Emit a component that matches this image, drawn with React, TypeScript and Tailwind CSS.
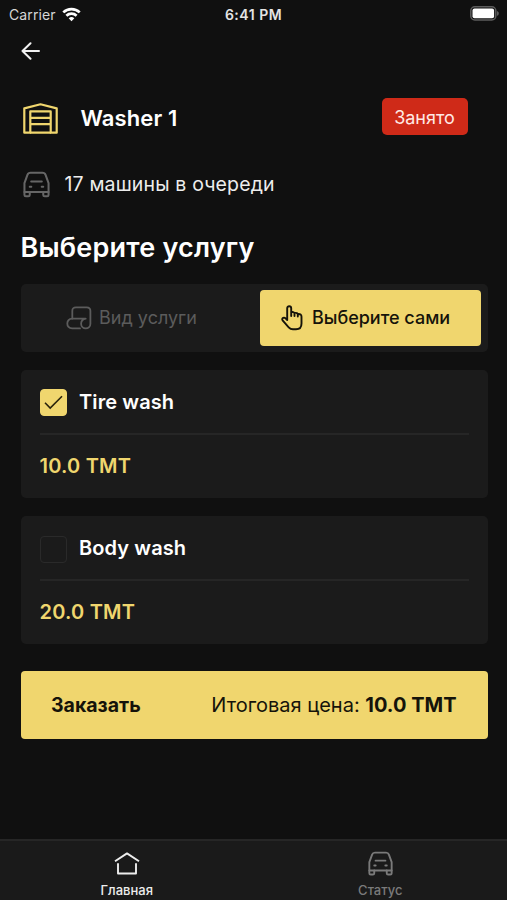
import { useState } from 'react'

type Service = {
  id: number
  name: string
  price: number
}

const services: Service[] = [
  { id: 1, name: 'Tire wash', price: 10 },
  { id: 2, name: 'Body wash', price: 20 },
]

function StatusBar() {
  return (
    <div className="grid h-7 grid-cols-3 items-center px-[9px] text-[14px] text-[#d6d6d6]">
      <div className="flex items-center gap-1.5">
        <span className="tracking-[0.1px]">Carrier</span>
        <svg width="19" height="15" viewBox="0 0 19 15" fill="none" stroke="#fff" strokeWidth="2.7">
          <path d="M1.3 5.4a11.8 11.8 0 0 1 16.4 0" />
          <path d="M4.4 8.8a7.3 7.3 0 0 1 10.2 0" />
          <path d="M9.5 14.2 6.7 11.3a4 4 0 0 1 5.6 0Z" fill="#fff" stroke="none" />
        </svg>
      </div>
      <span className="text-center text-[14px] font-semibold tracking-[0.5px] whitespace-nowrap text-[#e4e4e4]">6:41 PM</span>
      <svg className="-mr-[1px] mb-px justify-self-end" width="29" height="15" viewBox="0 0 29 15">
        <rect x=".8" y=".8" width="25" height="13.2" rx="4" fill="none" stroke="#5c5c5c" strokeWidth="1.5" />
        <rect x="2.5" y="2.5" width="21.6" height="9.8" rx="2" fill="#fff" />
        <path d="M27 5v4.8c1.2-.4 1.8-1.3 1.8-2.4S28.2 5.4 27 5Z" fill="#5c5c5c" />
      </svg>
    </div>
  )
}

function CarIcon({ className }: { className?: string }) {
  return (
    <svg className={className} viewBox="0 0 28 28" fill="none" stroke="currentColor" strokeWidth="2.1" strokeLinejoin="round" strokeLinecap="round">
      <path d="M1.5 21.8V12.5L4.6 4Q5.4 1.8 7.8 1.8H20.2Q22.6 1.8 23.4 4L26.5 12.5V21.8Z" />
      <path d="M1.5 21.8v3q0 1.5 1.5 1.5h2.5q1.5 0 1.5-1.5v-3M21 21.8v3q0 1.5 1.5 1.5H25q1.5 0 1.5-1.5v-3" />
      <path d="M8.5 10.8h11M7 16.3h1.6M19.4 16.3H21" />
    </svg>
  )
}

function GarageIcon() {
  return (
    <svg className="mt-[3px]" width="35" height="31" viewBox="0 0 35 31" fill="none" stroke="#f0d66e" strokeWidth="2.2">
      <path d="M1.3 29.7V5.4L17.5 1.3 33.7 5.4V29.7H27.7V8.4H7.3V29.7Z" strokeLinejoin="round" />
      <path d="M7.3 14.8h20.4M7.3 21.2h20.4M7 29.7h21" />
    </svg>
  )
}

function ServiceIcon() {
  return (
    <svg width="26" height="24" viewBox="0 0 26 24" fill="none" stroke="currentColor" strokeWidth="1.8" strokeLinecap="round" strokeLinejoin="round">
      <path d="M6.3 12.6V5Q6.3 1.3 10 1.3H20.7Q24.4 1.3 24.4 5V17.8a4.6 4.6 0 0 1-9.3 0q0-4.4 4.6-5.2H6.3" />
      <path d="M6.3 12.6q-5 .4-5 4.9t5 4.9H14" />
    </svg>
  )
}

function HandIcon() {
  return (
    <svg width="22" height="26" viewBox="0 0 22 26" fill="none" stroke="#15130a" strokeWidth="1.9" strokeLinecap="round" strokeLinejoin="round">
      <path d="M6.2 15V3.2a2 2 0 0 1 4 0V11M10.2 7.2q3.3-.8 3.3 1.8V11M13.5 8q3.3-.5 3.3 1.8v1.7M16.8 9q3.7-.4 3.7 2.8V18.5q0 5.8-5.5 5.8h-3q-2.5 0-4.3-2L1.6 15.3q-1-1.6.6-2.5 1.2-.6 2.4.6L6.2 15" />
    </svg>
  )
}

function ServiceCard({ service, checked, onToggle }: { service: Service; checked: boolean; onToggle: () => void }) {
  return (
    <div className="h-32 rounded-[5px] bg-[#1b1b1b] px-[19px]">
      <button onClick={onToggle} className="flex h-[63px] w-full items-center gap-[12.5px] pt-[3px]">
        <span className={`flex h-[27px] w-[27px] items-center justify-center rounded-[4px] border ${checked ? 'border-[#f0d66e] bg-[#f0d66e]' : 'border-[#2a2a2a]'}`}>
          {checked && (
            <svg width="19" height="15" viewBox="0 0 19 15" fill="none" stroke="#29230c" strokeWidth="1.6">
              <path d="M1 7.8 6.2 13 18 1.3" />
            </svg>
          )}
        </span>
        <span className="pb-[2px] text-[20px] font-semibold tracking-[0.1px] text-white">{service.name}</span>
      </button>
      <div className="h-0.5 bg-[#262626]" />
      <div className="flex h-[62px] items-center text-[20px] font-semibold tracking-[0.2px] text-[#f0d66e]">
        {service.price.toFixed(1)} TMT
      </div>
    </div>
  )
}

export default function App() {
  const [selected, setSelected] = useState<number[]>([1])

  const total = services.filter(s => selected.includes(s.id)).reduce((sum, s) => sum + s.price, 0)

  const toggle = (id: number) => {
    setSelected(prev => (prev.includes(id) ? prev.filter(x => x !== id) : [...prev, id]))
  }

  return (
    <div className="flex h-[900px] w-[507px] flex-col overflow-hidden bg-[#101010] font-['Inter',sans-serif] text-white">
      <StatusBar />
      <header className="flex h-11 items-center px-[21px] pt-px">
        <svg width="19" height="18" viewBox="0 0 19 18" fill="none" stroke="#f2f2f2" strokeWidth="2" strokeLinecap="round" strokeLinejoin="round">
          <path d="M18 9H1.5M9.5 1.2 1.5 9l8 7.8" />
        </svg>
      </header>

      <main className="flex flex-1 flex-col pr-[19.5px] pl-[20.5px]">
        <div className="mt-[26px] flex h-[37px] items-center pr-[20px] pl-[2.5px]">
          <GarageIcon />
          <h1 className="mt-[3px] ml-[22.5px] text-[22px] font-semibold tracking-[0.1px]">Washer 1</h1>
          <span className="ml-auto flex h-[37px] w-[86px] items-center justify-center rounded-[5px] bg-[#cf2a18] pt-px text-[18px] text-[#ffe9e4]">
            Занято
          </span>
        </div>

        <div className="mt-[35px] flex h-7 items-center pl-[2.5px]">
          <CarIcon className="h-[27px] w-[27px] text-[#666]" />
          <span className="ml-[14.5px] pt-px text-[19.5px] tracking-[0.15px] text-[#ededed]">17 машины в очереди</span>
        </div>

        <h2 className="mt-[31px] h-[38px] text-[27px] leading-[38px] font-semibold tracking-[0.2px]">Выберите услугу</h2>

        <div className="mt-[17px] flex h-[68px] shrink-0 items-center rounded-[5px] bg-[#1b1b1b] pr-[7px]">
          <button className="flex h-14 flex-1 items-center justify-center gap-[7px] pr-[17px] text-[#5c5c5c]">
            <ServiceIcon />
            <span className="pb-0.5 text-[18px]">Вид услуги</span>
          </button>
          <button className="flex h-14 w-[221px] items-center justify-center gap-[9px] rounded-[4px] bg-[#f0d66e] pr-[9px] text-[#15130a]">
            <HandIcon />
            <span className="pb-0.5 text-[18px] font-medium">Выберите сами</span>
          </button>
        </div>

        <div className="mt-[17.5px] flex flex-col gap-[18.5px]">
          {services.map(service => (
            <ServiceCard
              key={service.id}
              service={service}
              checked={selected.includes(service.id)}
              onToggle={() => toggle(service.id)}
            />
          ))}
        </div>

        <button className="mt-[27px] flex h-[68px] shrink-0 items-center justify-between rounded-[4px] bg-[#f0d66e] pr-[31px] pl-[30.5px] text-[20px] text-[#15130a]">
          <span className="pt-px text-[19.5px] font-bold">Заказать</span>
          <span>
            Итоговая цена: <strong className="font-bold">{total.toFixed(1)} TMT</strong>
          </span>
        </button>
      </main>

      <nav className="grid h-[61px] grid-cols-2 border-t-2 border-[#262626] bg-[#1a1a1a] text-[13px]">
        <a className="flex flex-col items-center pt-[11px] text-[#ededed]">
          <svg width="26" height="23" viewBox="0 0 26 23" fill="none" stroke="currentColor" strokeWidth="1.9">
            <path d="M1 9.2 13 1.4 25 9.2M4 11.2V21.5H22V11.2" strokeLinejoin="round" />
          </svg>
          <span className="mt-[6px] leading-[18px] font-medium">Главная</span>
        </a>
        <a className="flex flex-col items-center pt-[10px] text-[#7a7a7a]">
          <CarIcon className="h-[25px] w-[25px]" />
          <span className="mt-[5px] leading-[18px] font-medium">Статус</span>
        </a>
      </nav>
    </div>
  )
}
